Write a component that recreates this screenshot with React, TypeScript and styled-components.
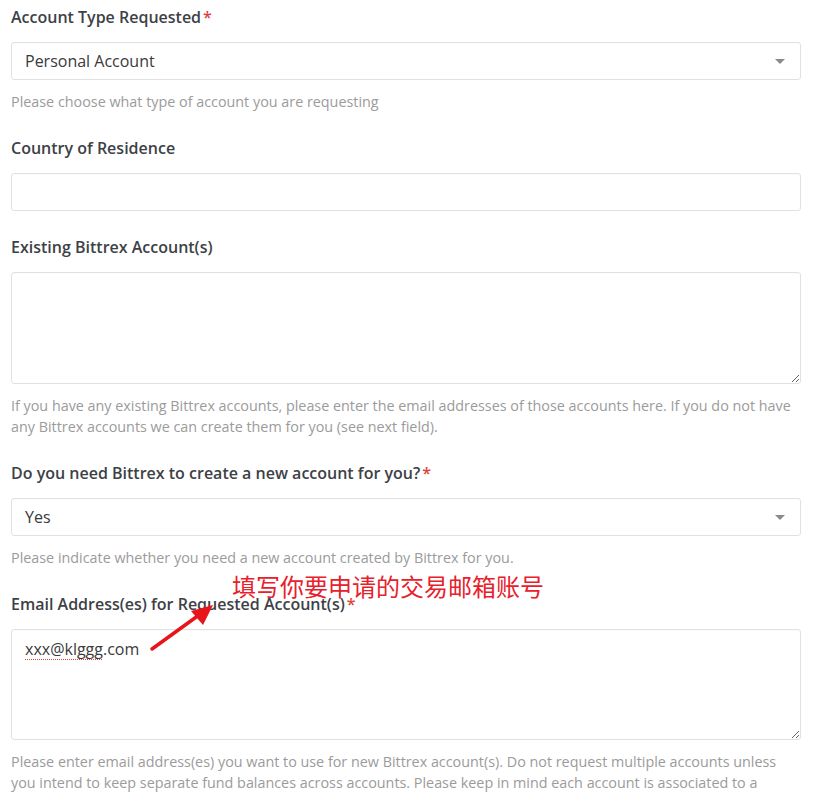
import React from "react";
import styled, { createGlobalStyle } from "styled-components";

const GlobalStyle = createGlobalStyle`
  html, body {
    margin: 0;
    padding: 0;
    background: #ffffff;
  }
  body {
    font-family: "Open Sans", "Noto Sans", "Noto Sans CJK SC", sans-serif;
    -webkit-font-smoothing: antialiased;
  }
  * {
    box-sizing: border-box;
  }
`;

const colors = {
  label: "#3d4146",
  text: "#3a3a3a",
  help: "#9b9b9b",
  border: "#e1e1e1",
  required: "#e0433a",
  annotation: "#e8202b",
};

const Form = styled.form`
  width: 801px;
  padding: 6px 0 0 11px;
  display: flex;
  flex-direction: column;
  gap: 25px;
`;

const Group = styled.div`
  position: relative;
  display: flex;
  flex-direction: column;
`;

const Label = styled.label`
  font-size: 16px;
  font-weight: 600;
  line-height: 22px;
  color: ${colors.label};
  margin-bottom: 14px;
`;

const Required = styled.span`
  color: ${colors.required};
  margin-left: 2px;
`;

const fieldBox = `
  width: 790px;
  border: 1px solid ${colors.border};
  border-radius: 3px;
  background: #ffffff;
  font-family: "Open Sans", "Noto Sans", sans-serif;
  font-size: 16px;
  color: ${colors.text};
  box-shadow: inset 0 1px 1px rgba(0, 0, 0, 0.02);
`;

const Select = styled.div`
  ${fieldBox}
  height: 38px;
  display: flex;
  align-items: center;
  justify-content: space-between;
  padding: 0 15px 0 13px;
`;

const Caret = styled.span`
  width: 0;
  height: 0;
  border-left: 5px solid transparent;
  border-right: 5px solid transparent;
  border-top: 5px solid #8a8a8a;
  margin-top: 1px;
`;

const Input = styled.div`
  ${fieldBox}
  height: 38px;
`;

const TextArea = styled.div<{ $height: number }>`
  ${fieldBox}
  height: ${(p) => p.$height}px;
  padding: 8px 13px;
  line-height: 22px;
  resize: vertical;
  overflow: auto;
`;

const Misspelled = styled.span`
  text-decoration: underline dotted #e0433a;
  text-decoration-thickness: 1px;
  text-underline-offset: 4px;
`;

const Help = styled.p`
  margin: 11px 0 0;
  font-size: 14.35px;
  line-height: 21px;
  color: ${colors.help};
  width: 790px;
`;

const Annotation = styled.span`
  position: absolute;
  left: 221px;
  top: -22px;
  font-family: "Noto Sans CJK SC", "Noto Sans", sans-serif;
  font-size: 24px;
  line-height: 30px;
  color: ${colors.annotation};
  white-space: nowrap;
`;

const Arrow = styled.svg`
  position: absolute;
  left: 126px;
  top: 8px;
`;

const App = () => {
  return (
    <>
      <GlobalStyle />
      <Form>
        <Group>
          <Label>
            Account Type Requested<Required>*</Required>
          </Label>
          <Select>
            <span>Personal Account</span>
            <Caret />
          </Select>
          <Help>Please choose what type of account you are requesting</Help>
        </Group>

        <Group>
          <Label>Country of Residence</Label>
          <Input />
        </Group>

        <Group>
          <Label>Existing Bittrex Account(s)</Label>
          <TextArea $height={112} />
          <Help>
            If you have any existing Bittrex accounts, please enter the email
            addresses of those accounts here. If you do not have any Bittrex
            accounts we can create them for you (see next field).
          </Help>
        </Group>

        <Group>
          <Label>
            Do you need Bittrex to create a new account for you?
            <Required>*</Required>
          </Label>
          <Select>
            <span>Yes</span>
            <Caret />
          </Select>
          <Help>
            Please indicate whether you need a new account created by Bittrex
            for you.
          </Help>
        </Group>

        <Group>
          <Annotation>填写你要申请的交易邮箱账号</Annotation>
          <Label>
            Email Address(es) for Requested Account(s)<Required>*</Required>
          </Label>
          <TextArea $height={111}>
            <Misspelled>xxx@klggg</Misspelled>.com
          </TextArea>
          <Help>
            Please enter email address(es) you want to use for new Bittrex
            account(s). Do not request multiple accounts unless you intend to
            keep separate fund balances across accounts. Please keep in mind
            each account is associated to a unique email address.
          </Help>
          <Arrow width="80" height="56" viewBox="0 0 80 56">
            <line
              x1="15"
              y1="48"
              x2="62"
              y2="14"
              stroke="#e8141c"
              strokeWidth="3.5"
              strokeLinecap="round"
            />
            <polygon points="76,4 54,10 66,24" fill="#e8141c" />
          </Arrow>
        </Group>
      </Form>
    </>
  );
};

export default App;
